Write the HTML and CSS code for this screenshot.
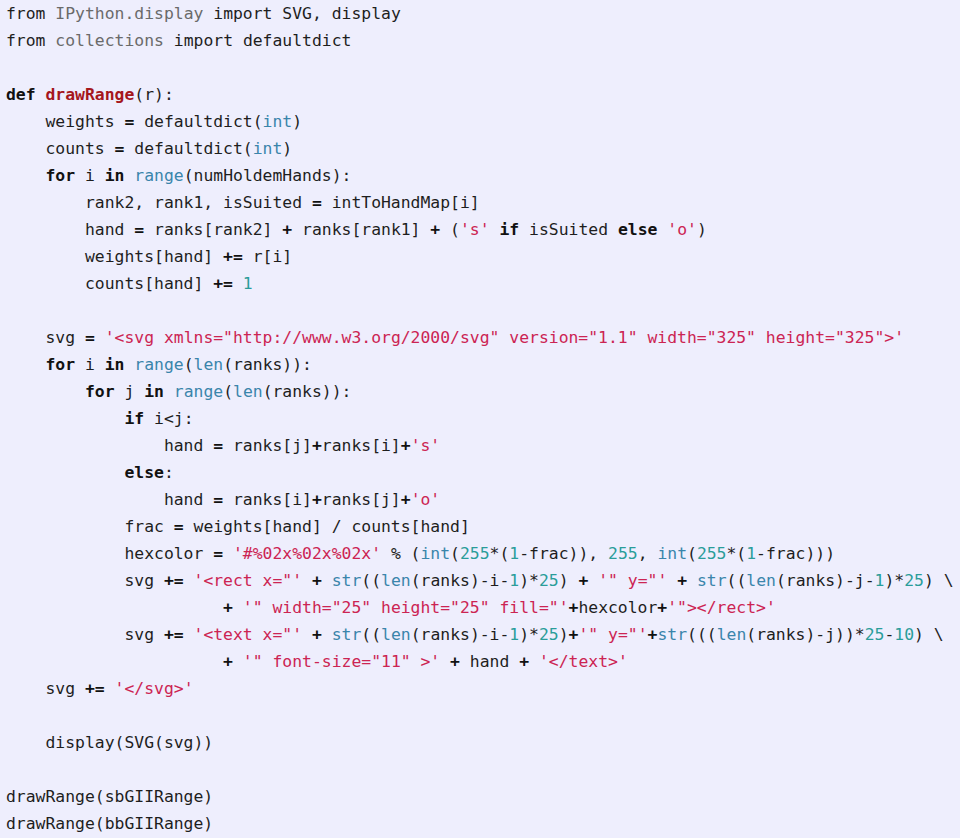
FILE: index.html
```html
<!DOCTYPE html>
<html>
<head>
<meta charset="utf-8">
<link rel="stylesheet" href="styles.css">
</head>
<body>
<pre class="code"><code><span class="kn">from</span> <span class="nn">IPython.display</span> <span class="kn">import</span> SVG, display
<span class="kn">from</span> <span class="nn">collections</span> <span class="kn">import</span> defaultdict

<span class="k">def</span> <span class="nf">drawRange</span>(r):
    weights <span class="o">=</span> defaultdict(<span class="nb">int</span>)
    counts <span class="o">=</span> defaultdict(<span class="nb">int</span>)
    <span class="k">for</span> i <span class="k">in</span> <span class="nb">range</span>(numHoldemHands):
        rank2, rank1, isSuited <span class="o">=</span> intToHandMap[i]
        hand <span class="o">=</span> ranks[rank2] <span class="o">+</span> ranks[rank1] <span class="o">+</span> (<span class="s">'s'</span> <span class="k">if</span> isSuited <span class="k">else</span> <span class="s">'o'</span>)
        weights[hand] <span class="o">+=</span> r[i]
        counts[hand] <span class="o">+=</span> <span class="m">1</span>

    svg <span class="o">=</span> <span class="s">'&lt;svg xmlns="http://www.w3.org/2000/svg" version="1.1" width="325" height="325"&gt;'</span>
    <span class="k">for</span> i <span class="k">in</span> <span class="nb">range</span>(<span class="nb">len</span>(ranks)):
        <span class="k">for</span> j <span class="k">in</span> <span class="nb">range</span>(<span class="nb">len</span>(ranks)):
            <span class="k">if</span> i&lt;j:
                hand <span class="o">=</span> ranks[j]<span class="o">+</span>ranks[i]<span class="o">+</span><span class="s">'s'</span>
            <span class="k">else</span>:
                hand <span class="o">=</span> ranks[i]<span class="o">+</span>ranks[j]<span class="o">+</span><span class="s">'o'</span>
            frac <span class="o">=</span> weights[hand] / counts[hand]
            hexcolor <span class="o">=</span> <span class="s">'#%02x%02x%02x'</span> % (<span class="nb">int</span>(<span class="m">255</span>*(<span class="m">1</span>-frac)), <span class="m">255</span>, <span class="nb">int</span>(<span class="m">255</span>*(<span class="m">1</span>-frac)))
            svg <span class="o">+=</span> <span class="s">'&lt;rect x="'</span> <span class="o">+</span> <span class="nb">str</span>((<span class="nb">len</span>(ranks)-i-<span class="m">1</span>)*<span class="m">25</span>) <span class="o">+</span> <span class="s">'" y="'</span> <span class="o">+</span> <span class="nb">str</span>((<span class="nb">len</span>(ranks)-j-<span class="m">1</span>)*<span class="m">25</span>) \
                      <span class="o">+</span> <span class="s">'" width="25" height="25" fill="'</span><span class="o">+</span>hexcolor<span class="o">+</span><span class="s">'"&gt;&lt;/rect&gt;'</span>
            svg <span class="o">+=</span> <span class="s">'&lt;text x="'</span> <span class="o">+</span> <span class="nb">str</span>((<span class="nb">len</span>(ranks)-i-<span class="m">1</span>)*<span class="m">25</span>)<span class="o">+</span><span class="s">'" y="'</span><span class="o">+</span><span class="nb">str</span>(((<span class="nb">len</span>(ranks)-j))*<span class="m">25</span>-<span class="m">10</span>) \
                      <span class="o">+</span> <span class="s">'" font-size="11" &gt;'</span> <span class="o">+</span> hand <span class="o">+</span> <span class="s">'&lt;/text&gt;'</span>
    svg <span class="o">+=</span> <span class="s">'&lt;/svg&gt;'</span>

    display(SVG(svg))

drawRange(sbGIIRange)
drawRange(bbGIIRange)</code></pre>
</body>
</html>
```

FILE: styles.css
```css
html, body {
  margin: 0;
  padding: 0;
  background: #eeeefd;
}

.code {
  margin: 0;
  padding: 0 0 0 6px;
  background: #eeeefd;
  color: #1e1e1e;
  font-family: "DejaVu Sans Mono", "Liberation Mono", monospace;
  font-size: 16.4px;
  line-height: 27px;
  white-space: pre;
}

.code code {
  font-family: inherit;
}

.kn { color: #1e1e1e; }
.nn { color: #6a6a6a; }
.k { color: #111111; font-weight: bold; }
.o { color: #111111; font-weight: bold; }
.nf { color: #a5161c; font-weight: bold; }
.nb { color: #3a85ab; }
.s { color: #cc2453; }
.m { color: #2a9d9a; }
```
